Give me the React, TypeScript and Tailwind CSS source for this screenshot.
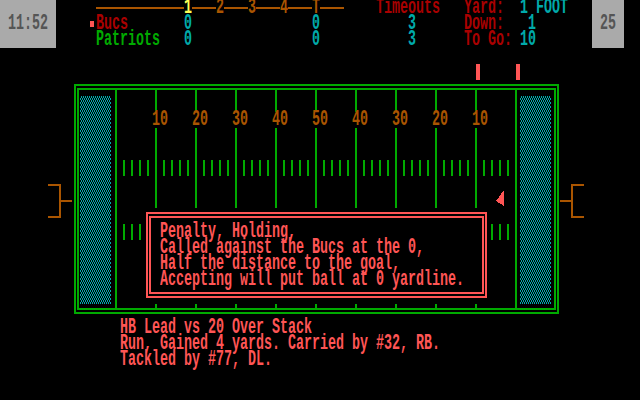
import type { ReactNode } from 'react';

// CGA palette
const RED = 'text-[#aa0000]';
const LRED = 'text-[#ff5555]';
const CYAN = 'text-[#00aaaa]';
const GREEN = 'text-[#00aa00]';
const BROWN = 'text-[#aa5500]';

const T = ({ c, children }: { c: string; children: ReactNode }) => (
  <span className={`inline-block scale-y-[1.6] ${c}`}>{children}</span>
);

const Row = ({ children }: { children: ReactNode }) => (
  <div className="flex h-4 items-center whitespace-pre leading-4">{children}</div>
);

const Rule = ({ w }: { w: string }) => <div className={`h-[2px] bg-[#aa5500] ${w}`} />;

const Hash = () => (
  <div className="flex gap-[6px]">
    {[0, 1, 2, 3].map((i) => (
      <div key={i} className="h-4 w-[2px] bg-[#00aa00]" />
    ))}
  </div>
);

const EndZone = ({ id }: { id: string }) => (
  <svg width="31" height="208" shapeRendering="crispEdges">
    <defs>
      <pattern id={id} width="2" height="4" patternUnits="userSpaceOnUse">
        <rect x="1" y="0" width="1" height="2" fill="#00aaaa" />
        <rect x="0" y="2" width="1" height="2" fill="#00aaaa" />
      </pattern>
    </defs>
    <rect width="31" height="208" fill={`url(#${id})`} />
  </svg>
);

const yardNumbers = ['10', '20', '30', '40', '50', '40', '30', '20', '10'];

const dialog = [
  'Penalty, Holding,',
  'Called against the Bucs at the 0,',
  'Half the distance to the goal,',
  'Accepting will put ball at 0 yardline.',
];

const playLog = [
  'HB Lead vs 20 Over Stack',
  'Run, Gained 4 yards. Carried by #32, RB.',
  'Tackled by #77, DL.',
];

export default function App() {
  return (
    <div className="relative h-[400px] w-[640px] overflow-hidden bg-black font-['Liberation_Mono','DejaVu_Sans_Mono',monospace] text-[13.333px] font-bold">
      {/* Scoreboard */}
      <div className="flex h-12">
        <div className="flex h-12 w-14 items-center justify-center bg-[#aaaaaa] leading-4">
          <T c="text-[#555555]">11:52</T>
        </div>

        <div className="flex w-[536px] flex-col">
          <Row>
            <div className="w-10" />
            <Rule w="w-[88px]" />
            <T c="text-[#ffff55]">1</T>
            <Rule w="w-6" />
            <T c={BROWN}>2</T>
            <Rule w="w-6" />
            <T c={BROWN}>3</T>
            <Rule w="w-6" />
            <T c={BROWN}>4</T>
            <Rule w="w-6" />
            <T c={BROWN}>T</T>
            <Rule w="w-6" />
            <T c={RED}>{'    Timeouts   Yard:  '}</T>
            <T c={CYAN}>1 FOOT</T>
          </Row>
          <Row>
            <div className="w-[34px]" />
            <div className="mr-[2px] h-[6px] w-1 bg-[#ff5555]" />
            <T c={RED}>Bucs</T>
            <T c={CYAN}>{'       0               0           3'}</T>
            <T c={RED}>{'      Down:'}</T>
            <T c={CYAN}>{'   1'}</T>
          </Row>
          <Row>
            <div className="w-10" />
            <T c={GREEN}>Patriots</T>
            <T c={CYAN}>{'   0               0           3'}</T>
            <T c={RED}>{'      To Go:'}</T>
            <T c={CYAN}>{' 10'}</T>
          </Row>
        </div>

        <div className="flex h-12 w-8 items-center justify-center bg-[#aaaaaa] leading-4">
          <T c="text-[#555555]">25</T>
        </div>
      </div>

      {/* Line of scrimmage / first down markers */}
      <div className="flex h-9 pt-4 pl-[476px]">
        <div className="h-4 w-1 bg-[#ff5555]" />
        <div className="ml-9 h-4 w-1 bg-[#ff5555]" />
      </div>

      {/* Field */}
      <div className="flex h-[230px] items-start">
        <div className="flex w-[74px] items-center pt-[100px] pl-12">
          <div className="h-[34px] w-[13px] border-y-2 border-r-2 border-[#aa5500]" />
          <div className="h-[2px] w-[11px] bg-[#aa5500]" />
        </div>

        <div className="h-[230px] w-[485px] border-2 border-[#00aa00] px-[1px] py-[2px]">
          <div className="flex h-full w-full border-2 border-[#00aa00]">
            <div className="w-9 pt-[6px] pl-[1px]">
              <EndZone id="ez-left" />
            </div>
            <div className="h-full w-[2px] bg-[#00aa00]" />

            <div className="relative flex h-full w-[398px]">
              {Array.from({ length: 10 }).map((_, i) => (
                <div key={i} className="flex h-full">
                  <div className="flex h-full w-[38px] flex-col pl-[6px]">
                    <div className="mt-[70px]">
                      <Hash />
                    </div>
                    <div className="mt-12">
                      <Hash />
                    </div>
                  </div>
                  {i < 9 && <div className="h-full w-[2px] bg-[#00aa00]" />}
                </div>
              ))}

              <div className="absolute top-[22px] left-0 flex gap-6 pl-[35px] leading-4">
                {yardNumbers.map((n, i) => (
                  <div key={i} className="h-4 w-4 bg-black">
                    <T c={BROWN}>{n}</T>
                  </div>
                ))}
              </div>

              <div className="absolute top-[118px] left-[27px] h-24 w-[344px] bg-black pt-1 pl-[2px]">
                <div className="h-[86px] w-[341px] border-2 border-[#ff5555] px-[1px] py-[2px]">
                  <div className="h-full border-2 border-[#ff5555] pt-[6px] pl-[9px]">
                    {dialog.map((line) => (
                      <Row key={line}>
                        <T c={LRED}>{line}</T>
                      </Row>
                    ))}
                  </div>
                </div>
              </div>
            </div>

            <div className="h-full w-[2px] bg-[#00aa00]" />
            <div className="w-[37px] pt-[6px] pl-[3px]">
              <EndZone id="ez-right" />
            </div>
          </div>
        </div>

        <div className="flex items-center pt-[100px] pl-[1px]">
          <div className="h-[2px] w-[11px] bg-[#aa5500]" />
          <div className="h-[34px] w-[13px] border-y-2 border-l-2 border-[#aa5500]" />
        </div>
      </div>

      {/* Ball */}
      <svg className="absolute top-[189px] left-[496px]" width="8" height="18" shapeRendering="crispEdges">
        <polygon points="8,1 8,17 0,12" fill="#ff5555" />
      </svg>

      {/* Play log */}
      <div className="mt-[6px] pl-[120px]">
        {playLog.map((line) => (
          <Row key={line}>
            <T c={LRED}>{line}</T>
          </Row>
        ))}
      </div>
    </div>
  );
}
